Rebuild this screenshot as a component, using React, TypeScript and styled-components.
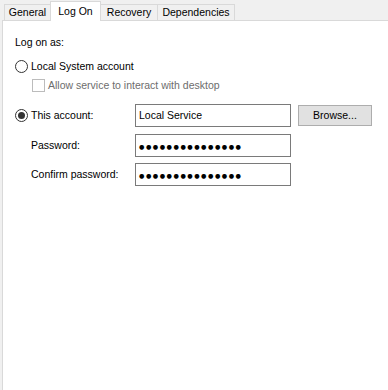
import React from "react";
import styled, { createGlobalStyle } from "styled-components";

const Global = createGlobalStyle`
  html, body { margin: 0; padding: 0; background: #f0f0f0; }
  body { font-family: "Liberation Sans", Arial, sans-serif; font-size: 10.5px; color: #000; }
`;

const Window = styled.div`
  width: 388px;
  height: 390px;
  display: flex;
  flex-direction: column;
  background: #f0f0f0;
  overflow: hidden;
`;

const TabBar = styled.div`
  height: 20px;
  display: flex;
  align-items: flex-end;
  padding-left: 4px;
  position: relative;
  z-index: 1;
`;

const Tab = styled.div<{ $w: number; $active?: boolean }>`
  box-sizing: border-box;
  width: ${(p) => p.$w}px;
  height: ${(p) => (p.$active ? 20 : 16)}px;
  margin-bottom: ${(p) => (p.$active ? -1 : 0)}px;
  border: 1px solid #d9d9d9;
  border-bottom: none;
  background: ${(p) => (p.$active ? "#ffffff" : "#f0f0f0")};
  display: flex;
  align-items: ${(p) => (p.$active ? "flex-start" : "center")};
  padding-top: ${(p) => (p.$active ? 3 : 0)}px;
  justify-content: center;
  line-height: 13px;
  white-space: nowrap;
  & + & { margin-left: -1px; }
`;

const Panel = styled.div`
  flex: 1;
  margin-left: 2px;
  background: #ffffff;
  border-top: 1px solid #d9d9d9;
  border-left: 1px solid #d9d9d9;
  padding: 15px 0 0 12px;
  display: flex;
  flex-direction: column;
`;

const Text = styled.div<{ $disabled?: boolean }>`
  line-height: 13px;
  white-space: nowrap;
  color: ${(p) => (p.$disabled ? "#6d6d6d" : "#000")};
`;

const Row = styled.div<{ $mt: number; $indent?: number }>`
  display: flex;
  align-items: center;
  margin-top: ${(p) => p.$mt}px;
  padding-left: ${(p) => p.$indent ?? 0}px;
`;

const LabelCell = styled.div`
  width: 120px;
  display: flex;
  align-items: center;
  gap: 3px;
`;

const IndentLabel = styled(Text)`
  padding-left: 16px;
`;

const Radio = styled.span<{ $checked?: boolean }>`
  box-sizing: border-box;
  width: 13px;
  height: 13px;
  border-radius: 50%;
  border: 1px solid #333333;
  background: #fff;
  display: inline-flex;
  align-items: center;
  justify-content: center;
  flex: none;
  &::after {
    content: "";
    display: ${(p) => (p.$checked ? "block" : "none")};
    width: 7px;
    height: 7px;
    border-radius: 50%;
    background: #333333;
  }
`;

const Checkbox = styled.span`
  box-sizing: border-box;
  width: 13px;
  height: 13px;
  border: 1px solid #bcbcbc;
  background: #fff;
  flex: none;
  margin-right: 3px;
`;

const TextBox = styled.div`
  box-sizing: border-box;
  width: 156px;
  height: 23px;
  border: 1px solid #7a7a7a;
  background: #fff;
  padding-left: 3px;
  display: flex;
  align-items: center;
  line-height: 13px;
  white-space: nowrap;
`;

const Dots = styled.span`
  font-family: "DejaVu Sans", sans-serif;
  font-size: 6.2px;
  letter-spacing: 1.5px;
  line-height: 13px;
  padding-top: 1px;
`;

const Button = styled.div`
  box-sizing: border-box;
  width: 74px;
  height: 21px;
  margin-left: 7px;
  border: 1px solid #adadad;
  background: #e1e1e1;
  display: flex;
  align-items: center;
  justify-content: center;
  line-height: 13px;
`;

export default function App() {
  const dots = "●".repeat(15);
  return (
    <>
      <Global />
      <Window>
        <TabBar>
          <Tab $w={47}>General</Tab>
          <Tab $w={51} $active>Log On</Tab>
          <Tab $w={58}>Recovery</Tab>
          <Tab $w={78}>Dependencies</Tab>
        </TabBar>
        <Panel>
          <Text>Log on as:</Text>
          <Row $mt={11}>
            <LabelCell>
              <Radio />
              <Text>Local System account</Text>
            </LabelCell>
          </Row>
          <Row $mt={6} $indent={17}>
            <Checkbox />
            <Text $disabled>Allow service to interact with desktop</Text>
          </Row>
          <Row $mt={12}>
            <LabelCell>
              <Radio $checked />
              <Text>This account:</Text>
            </LabelCell>
            <TextBox>Local Service</TextBox>
            <Button>Browse...</Button>
          </Row>
          <Row $mt={7}>
            <LabelCell>
              <IndentLabel>Password:</IndentLabel>
            </LabelCell>
            <TextBox>
              <Dots>{dots}</Dots>
            </TextBox>
          </Row>
          <Row $mt={6}>
            <LabelCell>
              <IndentLabel>Confirm password:</IndentLabel>
            </LabelCell>
            <TextBox>
              <Dots>{dots}</Dots>
            </TextBox>
          </Row>
        </Panel>
      </Window>
    </>
  );
}
